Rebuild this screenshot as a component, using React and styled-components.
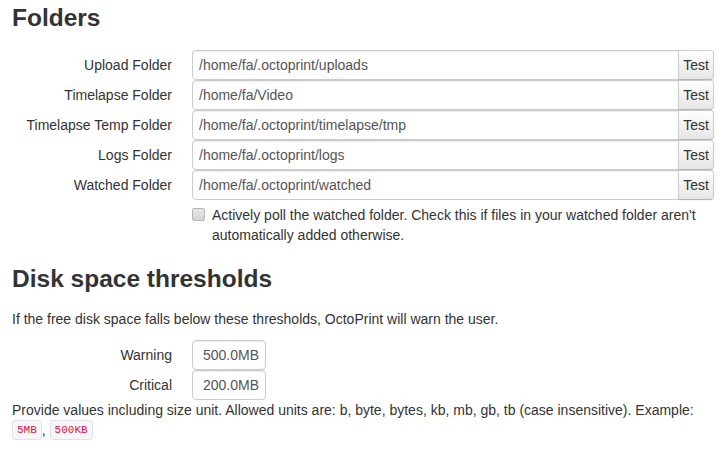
import React from "react";
import styled, { createGlobalStyle } from "styled-components";

const Global = createGlobalStyle`
  html, body { margin: 0; padding: 0; background: #fff; }
  body {
    font-family: "Liberation Sans", Arial, Helvetica, sans-serif;
    font-size: 14px;
    line-height: 20px;
    color: #333;
  }
`;

const Page = styled.div`
  padding: 0 9px 0 12px;
`;

const Heading = styled.h3`
  margin: ${(p) => (p.$first ? "0 0 14px" : "16px 0 12px")};
  font-size: 24.5px;
  line-height: 36px;
  font-weight: bold;
  color: #333;
`;

const FieldRow = styled.div`
  display: grid;
  grid-template-columns: 160px 1fr;
  column-gap: 20px;
  height: 30px;
`;

const Label = styled.label`
  text-align: right;
  line-height: 30px;
  color: #333;
  white-space: nowrap;
`;

const Append = styled.div`
  display: flex;
  height: 30px;
`;

const TextInput = styled.input`
  box-sizing: border-box;
  height: 30px;
  width: ${(p) => p.$width || "auto"};
  flex: ${(p) => (p.$width ? "none" : "1")};
  min-width: 0;
  margin: 0;
  padding: 4px 6px;
  border: 1px solid #ccc;
  border-radius: ${(p) => (p.$append ? "4px 0 0 4px" : "4px")};
  box-shadow: inset 0 1px 1px rgba(0, 0, 0, 0.075);
  font-family: "Liberation Sans", Arial, Helvetica, sans-serif;
  font-size: 14px;
  line-height: 20px;
  color: #555;
  text-align: ${(p) => (p.$right ? "right" : "left")};
  background: #fff;
  outline: none;
`;

const AddonButton = styled.button`
  box-sizing: border-box;
  height: 30px;
  margin: 0 0 0 -1px;
  padding: 0 4px;
  border: 1px solid #ccc;
  border-bottom-color: #b3b3b3;
  border-radius: 0 4px 4px 0;
  background: linear-gradient(to bottom, #ffffff, #e6e6e6);
  box-shadow: inset 0 1px 0 rgba(255, 255, 255, 0.2), 0 1px 2px rgba(0, 0, 0, 0.05);
  font-family: "Liberation Sans", Arial, Helvetica, sans-serif;
  font-size: 14px;
  line-height: 20px;
  color: #333;
  cursor: pointer;
`;

const CheckRow = styled.div`
  display: grid;
  grid-template-columns: 160px 1fr;
  column-gap: 20px;
  margin-top: 5px;
`;

const CheckLabel = styled.label`
  display: flex;
  align-items: flex-start;
  gap: 7px;
  color: #333;
`;

const CheckBox = styled.span`
  flex: none;
  box-sizing: border-box;
  width: 13px;
  height: 13px;
  margin-top: 3px;
  border: 1px solid #b5b5b5;
  border-radius: 2px;
  background: linear-gradient(to bottom, #e8e8e8, #d4d4d4);
`;

const Paragraph = styled.p`
  margin: 0 0 11px;
`;

const HelpText = styled.div`
  color: #333;
`;

const Code = styled.code`
  display: inline-block;
  padding: 0 4px;
  font-family: "Liberation Mono", Consolas, monospace;
  font-size: 11px;
  line-height: 18px;
  color: #dd1144;
  background: #f7f7f9;
  border: 1px solid #e1e1e8;
  border-radius: 3px;
  vertical-align: top;
  margin-top: 0;
`;

const folders = [
  ["Upload Folder", "/home/fa/.octoprint/uploads"],
  ["Timelapse Folder", "/home/fa/Video"],
  ["Timelapse Temp Folder", "/home/fa/.octoprint/timelapse/tmp"],
  ["Logs Folder", "/home/fa/.octoprint/logs"],
  ["Watched Folder", "/home/fa/.octoprint/watched"],
];

const thresholds = [
  ["Warning", "500.0MB"],
  ["Critical", "200.0MB"],
];

export default function App() {
  return (
    <Page>
      <Global />
      <Heading $first>Folders</Heading>
      {folders.map(([label, value]) => (
        <FieldRow key={label}>
          <Label>{label}</Label>
          <Append>
            <TextInput $append readOnly value={value} />
            <AddonButton type="button">Test</AddonButton>
          </Append>
        </FieldRow>
      ))}
      <CheckRow>
        <span />
        <CheckLabel>
          <CheckBox />
          <span>
            Actively poll the watched folder. Check this if files in your watched folder aren't automatically added otherwise.
          </span>
        </CheckLabel>
      </CheckRow>

      <Heading>Disk space thresholds</Heading>
      <Paragraph>
        If the free disk space falls below these thresholds, OctoPrint will warn the user.
      </Paragraph>
      {thresholds.map(([label, value]) => (
        <FieldRow key={label}>
          <Label>{label}</Label>
          <div>
            <TextInput $width="74px" $right readOnly value={value} />
          </div>
        </FieldRow>
      ))}
      <HelpText>
        Provide values including size unit. Allowed units are: b, byte, bytes, kb, mb, gb, tb (case insensitive). Example:{" "}
        <Code>5MB</Code>, <Code>500KB</Code>
      </HelpText>
    </Page>
  );
}
